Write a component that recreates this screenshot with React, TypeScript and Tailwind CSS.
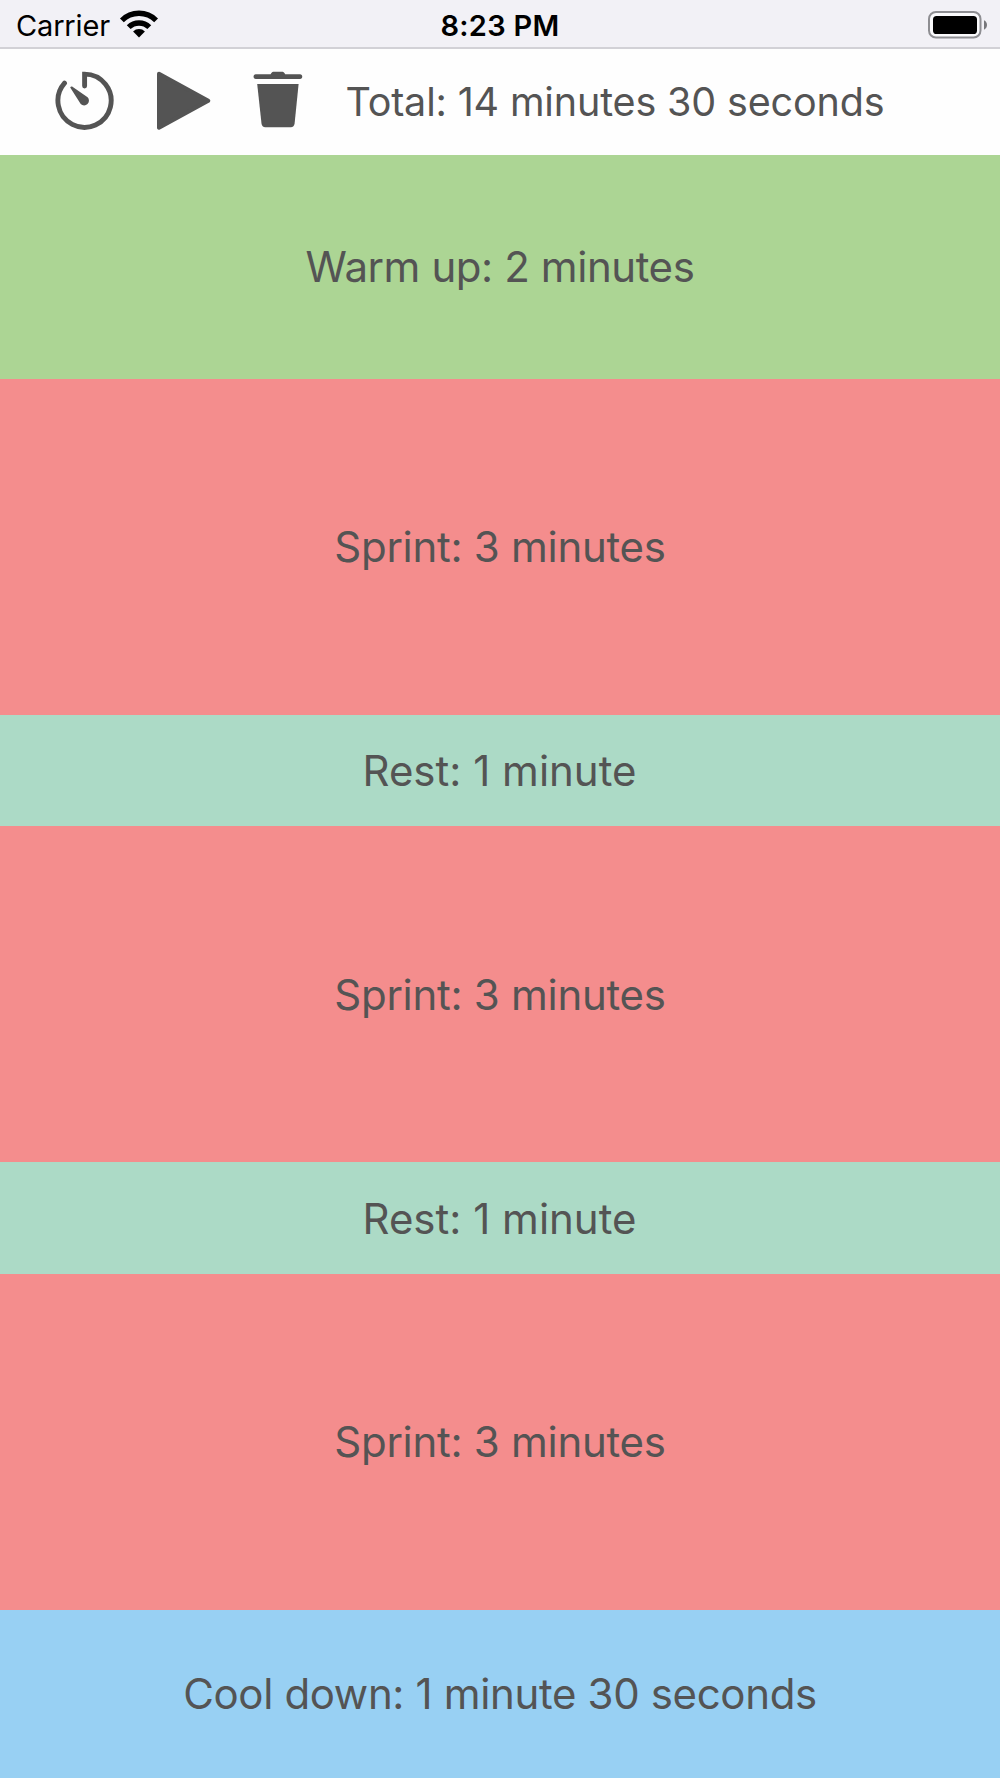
type Interval = { label: string; box: string };

const intervals: Interval[] = [
  { label: 'Warm up: 2 minutes', box: 'h-[224px] bg-[#acd594] tracking-[-0.42px]' },
  { label: 'Sprint: 3 minutes', box: 'h-[336px] bg-[#f48d8d] tracking-[-0.28px]' },
  { label: 'Rest: 1 minute', box: 'h-[111px] bg-[#acdac6] pt-px pr-px' },
  { label: 'Sprint: 3 minutes', box: 'h-[336px] bg-[#f48d8d] pt-px tracking-[-0.28px]' },
  { label: 'Rest: 1 minute', box: 'h-[112px] bg-[#acdac6] pt-px pr-px' },
  { label: 'Sprint: 3 minutes', box: 'h-[336px] bg-[#f48d8d] tracking-[-0.28px]' },
  { label: 'Cool down: 1 minute 30 seconds', box: 'h-[168px] bg-[#98d0f3] tracking-[-0.35px]' },
];

function WifiIcon() {
  return (
    <svg className="h-[28px] w-[40px]" viewBox="0 0 40 28" fill="none" stroke="#000">
      <path d="M2.9 10.4A24.2 24.2 0 0 1 37.1 10.4" strokeWidth="5.4" />
      <path d="M9.7 17.2A14.6 14.6 0 0 1 30.3 17.2" strokeWidth="5.4" />
      <path d="M20 27.4L14.1 21.5A8.3 8.3 0 0 1 25.9 21.5Z" fill="#000" stroke="none" />
    </svg>
  );
}

function BatteryIcon() {
  return (
    <svg className="h-[28px] w-[60px]" viewBox="0 0 60 28">
      <rect x="1" y="1" width="51.5" height="25.5" rx="7" fill="#fafafc" stroke="#8e8e92" strokeWidth="2" />
      <rect x="5" y="5" width="44" height="18" rx="3.6" fill="#000" />
      <path d="M56 9.3C60 11.2 60 16.8 56 18.7Z" fill="#77777b" />
    </svg>
  );
}

function TimerIcon() {
  return (
    <svg className="size-16" viewBox="0 0 64 64" fill="none" stroke="#545454" strokeWidth="4.9">
      <path d="M12.5 13.2A26.6 26.6 0 1 0 32.6 4.1V16" strokeLinecap="round" strokeLinejoin="miter" />
      <path d="M18.2 17.6C18.8 16.3 19.8 16.3 20.8 17L35.6 27.3A4.7 4.7 0 1 1 28.7 34Z" fill="#545454" stroke="none" />
    </svg>
  );
}

function PlayIcon() {
  return (
    <svg className="size-16" viewBox="0 0 64 64" fill="#545454" stroke="#545454" strokeWidth="4" strokeLinejoin="round">
      <path d="M7 3.8L56.3 30.7L7 57.7Z" />
    </svg>
  );
}

function TrashIcon() {
  return (
    <svg className="size-16" viewBox="0 0 64 64" fill="#545454">
      <path d="M24.6 4.2L25.4 3C26 2.1 26.8 1.7 28 1.7H35.8C37 1.7 37.8 2.1 38.4 3L39.2 4.2H54C57 4.2 57 9 54 9H9.8C6.8 9 6.8 4.2 9.8 4.2Z" />
      <path d="M11.2 14H52.6L48.6 53.6C48.3 56 47 57.2 44.8 57.2H19.3C17.1 57.2 15.8 56 15.5 53.6Z" />
    </svg>
  );
}

export default function App() {
  return (
    <div className="flex h-[1778px] w-[1000px] flex-col overflow-hidden bg-white font-['Inter',sans-serif] text-[#545454]">
      <div className="grid h-[49px] shrink-0 grid-cols-3 items-center border-b-2 border-[#d2d1d6] bg-[#f2f1f6] pt-[3px] text-black">
        <div className="flex items-center gap-[9px] pl-4">
          <span className="text-[29px] leading-none tracking-[-0.16px]">Carrier</span>
          <span className="-mt-[3px]">
            <WifiIcon />
          </span>
        </div>
        <div className="pt-px text-center text-[29px] leading-none font-semibold tracking-[0.3px]">8:23 PM</div>
        <div className="-mt-[2px] flex justify-end pt-[1px] pr-[12px]">
          <BatteryIcon />
        </div>
      </div>
      <header className="flex h-[106px] shrink-0 items-center bg-[#fefefe] pl-[52px]">
        <button className="mr-9">
          <TimerIcon />
        </button>
        <button className="mr-[30px]">
          <PlayIcon />
        </button>
        <button className="mr-[35.4px]">
          <TrashIcon />
        </button>
        <span className="pt-[2px] text-[39.5px] leading-none tracking-[-0.16px] whitespace-nowrap">Total: 14 minutes 30 seconds</span>
      </header>
      <main className="flex flex-col text-[42px] leading-none">
        {intervals.map((interval, index) => (
          <section key={index} className={`flex shrink-0 items-center justify-center ${interval.box}`}>
            {interval.label}
          </section>
        ))}
      </main>
    </div>
  );
}
